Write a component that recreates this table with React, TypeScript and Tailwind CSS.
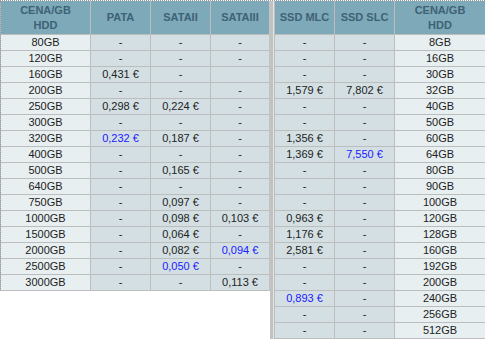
import React from "react";

type Cell = { t: string; blue?: boolean };
const c = (t: string, blue = false): Cell => ({ t, blue });

const leftRows: [string, Cell, Cell, Cell][] = [
  ["80GB", c("-"), c("-"), c("-")],
  ["120GB", c("-"), c("-"), c("-")],
  ["160GB", c("0,431 €"), c("-"), c("")],
  ["200GB", c("-"), c("-"), c("-")],
  ["250GB", c("0,298 €"), c("0,224 €"), c("-")],
  ["300GB", c("-"), c("-"), c("-")],
  ["320GB", c("0,232 €", true), c("0,187 €"), c("-")],
  ["400GB", c("-"), c("-"), c("-")],
  ["500GB", c("-"), c("0,165 €"), c("-")],
  ["640GB", c("-"), c("-"), c("-")],
  ["750GB", c("-"), c("0,097 €"), c("-")],
  ["1000GB", c("-"), c("0,098 €"), c("0,103 €")],
  ["1500GB", c("-"), c("0,064 €"), c("-")],
  ["2000GB", c("-"), c("0,082 €"), c("0,094 €", true)],
  ["2500GB", c("-"), c("0,050 €", true), c("-")],
  ["3000GB", c("-"), c("-"), c("0,113 €")],
];

const rightRows: [Cell, Cell, string][] = [
  [c("-"), c("-"), "8GB"],
  [c("-"), c("-"), "16GB"],
  [c("-"), c("-"), "30GB"],
  [c("1,579 €"), c("7,802 €"), "32GB"],
  [c("-"), c("-"), "40GB"],
  [c("-"), c("-"), "50GB"],
  [c("1,356 €"), c("-"), "60GB"],
  [c("1,369 €"), c("7,550 €", true), "64GB"],
  [c("-"), c("-"), "80GB"],
  [c("-"), c("-"), "90GB"],
  [c("-"), c("-"), "100GB"],
  [c("0,963 €"), c("-"), "120GB"],
  [c("1,176 €"), c("-"), "128GB"],
  [c("2,581 €"), c("-"), "160GB"],
  [c("-"), c("-"), "192GB"],
  [c("-"), c("-"), "200GB"],
  [c("0,893 €", true), c("-"), "240GB"],
  [c("-"), c("-"), "256GB"],
  [c("-"), c("-"), "512GB"],
];

const Head = ({ children }: { children: React.ReactNode }) => (
  <div className="h-[33px] bg-[#7ea9b9] text-[#3d6275] font-bold text-[11px] leading-[15px] flex items-center justify-center text-center">
    {children}
  </div>
);

const Size = ({ t }: { t: string }) => (
  <div className="h-[15px] bg-[#e8eff1] text-[#222] text-[11px] leading-[15px] flex items-center justify-center">
    {t}
  </div>
);

const Val = ({ cell }: { cell: Cell }) => (
  <div
    className={
      "h-[15px] bg-[#d3dfe3] text-[11px] leading-[15px] flex items-center justify-center " +
      (cell.blue ? "text-[#2020ff]" : "text-[#222]")
    }
  >
    {cell.t}
  </div>
);

export default function App() {
  return (
    <div
      className="w-[485px] h-[339px] bg-white flex border-t border-dotted border-[#9a9a9a] overflow-hidden"
      style={{ fontFamily: '"Liberation Sans", Arial, sans-serif' }}
    >
      <div className="w-[270px] flex flex-col">
        <div className="grid grid-cols-[89px_59px_59px_58px] gap-px bg-[#bdbdbd] border-l border-dotted border-l-[#9a9a9a] border-r border-r-[#c8c8c8] border-b border-b-[#bdbdbd]">
          <Head>
            CENA/GB
            <br />
            HDD
          </Head>
          <Head>PATA</Head>
          <Head>SATAII</Head>
          <Head>SATAIII</Head>
          {leftRows.map((r) => (
            <React.Fragment key={r[0]}>
              <Size t={r[0]} />
              <Val cell={r[1]} />
              <Val cell={r[2]} />
              <Val cell={r[3]} />
            </React.Fragment>
          ))}
        </div>
      </div>
      <div className="w-[4px] flex">
        <div className="w-[3px] bg-[#c2c2c2]" />
        <div className="w-[1px] bg-[#e4e4e4]" />
      </div>
      <div className="w-[211px] flex flex-col">
        <div className="grid grid-cols-[59px_59px_90px] gap-px bg-[#bdbdbd] border-l border-[#bdbdbd] border-b">
          <Head>SSD MLC</Head>
          <Head>SSD SLC</Head>
          <Head>
            CENA/GB
            <br />
            HDD
          </Head>
          {rightRows.map((r) => (
            <React.Fragment key={r[2]}>
              <Val cell={r[0]} />
              <Val cell={r[1]} />
              <Size t={r[2]} />
            </React.Fragment>
          ))}
        </div>
      </div>
    </div>
  );
}
